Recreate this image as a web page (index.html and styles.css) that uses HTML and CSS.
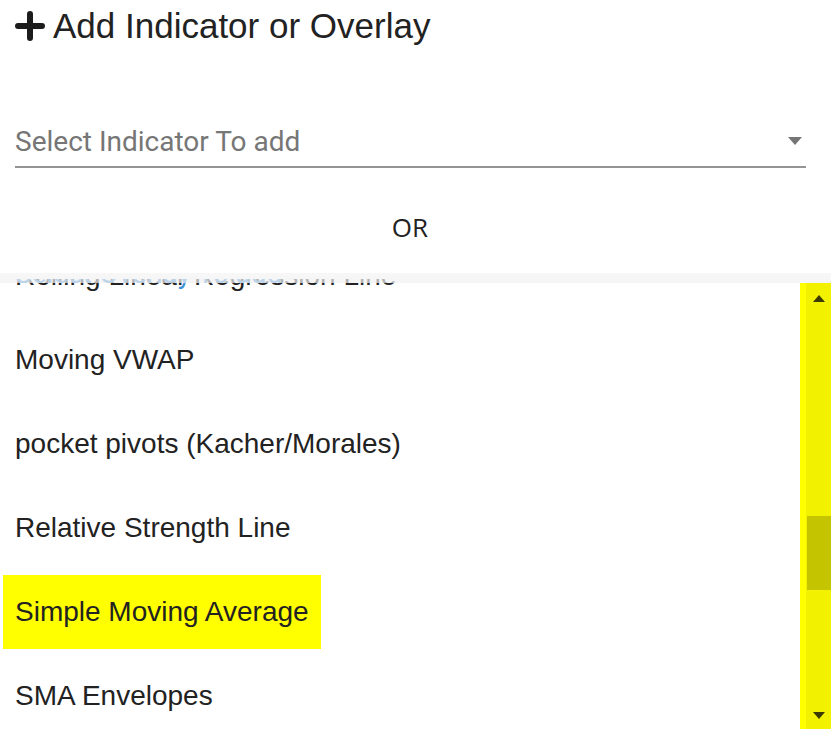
FILE: index.html
```html
<!DOCTYPE html>
<html lang="en">

<head>
    <meta charset="UTF-8">
    <meta name="viewport" content="width=device-width, initial-scale=1.0">
    <title>Add Indicator or Overlay</title>
    <link rel="stylesheet" href="styles.css">
</head>

<body>
    <h1 class="title">
        <svg class="plus" width="30" height="30" viewBox="0 0 30 30">
            <path d="M15 3v24M3 15h24" stroke="#1c1c1c" stroke-width="6" stroke-linecap="round" />
        </svg>
        Add Indicator or Overlay
    </h1>

    <div class="select">
        <span class="placeholder">Select Indicator To add</span>
        <svg class="caret" width="14" height="8" viewBox="0 0 14 8">
            <path d="M0 0h14L7 8z" fill="#757575" />
        </svg>
    </div>

    <div class="or">OR</div>

    <div class="picker">
        <ul class="options">
            <li class="clipped">
                <span>Rolling Linear Regression Line</span>
                <span class="ghost">Select Overlay To add</span>
            </li>
            <li><span>Moving VWAP</span></li>
            <li><span>pocket pivots (Kacher/Morales)</span></li>
            <li><span>Relative Strength Line</span></li>
            <li><span class="hl">Simple Moving Average</span></li>
            <li><span>SMA Envelopes</span></li>
        </ul>
        <div class="scrollbar">
            <svg class="arrow up" width="12" height="7" viewBox="0 0 12 7">
                <path d="M0 7h12L6 0z" fill="#3a3a00" />
            </svg>
            <div class="thumb"></div>
            <svg class="arrow down" width="12" height="7" viewBox="0 0 12 7">
                <path d="M0 0h12L6 7z" fill="#3a3a00" />
            </svg>
        </div>
    </div>
</body>

</html>
```

FILE: styles.css
```css
* {
    margin: 0;
    padding: 0;
    box-sizing: border-box;
}

body {
    width: 831px;
    height: 729px;
    overflow: hidden;
    background: #fff;
    color: #222;
    font-family: "Liberation Sans", Arial, sans-serif;
}

.title {
    height: 56px;
    display: flex;
    align-items: center;
    gap: 8px;
    padding: 0 15px 4px;
    font-size: 35px;
    font-weight: normal;
    color: #222;
}

.plus {
    flex: none;
}

.select {
    height: 56px;
    margin: 56px 25px 0 15px;
    display: flex;
    align-items: center;
    justify-content: space-between;
    border-bottom: 2px solid #949494;
    padding: 4px 4px 0 0;
}

.placeholder {
    font-family: Roboto, "Liberation Sans", sans-serif;
    font-size: 28px;
    color: #767676;
}

.or {
    height: 111px;
    padding: 41px 11px 0 0;
    text-align: center;
    font-family: "Open Sans", "Liberation Sans", sans-serif;
    font-size: 26px;
    line-height: 36px;
    color: #222;
}

.picker {
    height: 450px;
    display: flex;
    position: relative;
}

/* faint shade at the top edge of the list */
.picker::before {
    content: "";
    position: absolute;
    left: 0;
    right: 0;
    top: -6px;
    height: 10px;
    background: linear-gradient(#f4f4f4, #f0f0f0);
    opacity: 0.7;
    z-index: 1;
}

.options {
    flex: 1;
    list-style: none;
    overflow: hidden;
}

.options li {
    height: 84px;
    display: flex;
    align-items: center;
    padding-left: 3px;
    position: relative;
    font-size: 28px;
}

.options li span {
    padding: 0 12px;
    line-height: 74px;
}

.options li.clipped {
    margin-top: -45px;
}

.ghost {
    position: absolute;
    left: 3px;
    top: 3px;
    font-family: Roboto, "Liberation Sans", sans-serif;
    color: #3d8fd6;
}

.options li span.hl {
    background: #ffff00;
}

.scrollbar {
    width: 31px;
    margin-top: 4px;
    background: linear-gradient(90deg, #ffff00 0, #ffff00 6px, #f2f200 6px);
    position: relative;
}

.arrow {
    position: absolute;
    left: 13px;
}

.arrow.up {
    top: 12px;
}

.arrow.down {
    bottom: 10px;
}

.thumb {
    position: absolute;
    left: 7px;
    right: 0;
    top: 233px;
    height: 74px;
    background: #c4c400;
}
```
